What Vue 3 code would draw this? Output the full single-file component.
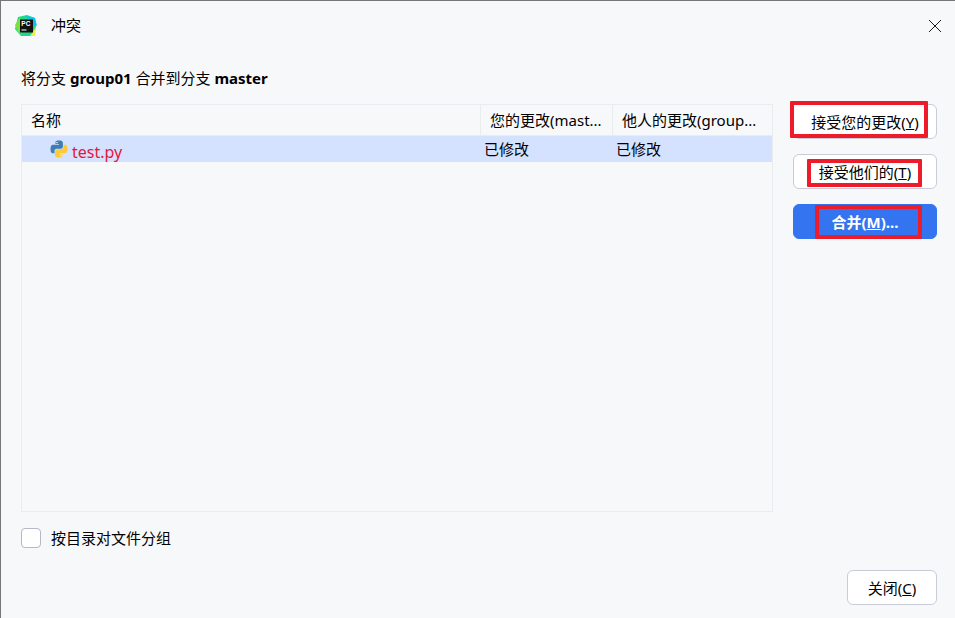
<script setup>
const rows = [{ name: 'test.py', mine: '已修改', theirs: '已修改' }]
</script>

<template>
  <div class="window">
    <header class="titlebar">
      <svg class="logo" width="22" height="22" viewBox="0 0 22 22">
        <path d="M3 2 L12 0 L20 3 L21 12 L18 21 L6 21 L0 14 Z" fill="#21d789" />
        <path d="M11 1 L20 3 L22 11 L17 9 Z" fill="#07c3f2" />
        <path d="M0 10 L5 2 L7 19 L3 17 Z" fill="#7fe03c" />
        <path d="M15 21 L21 12 L20 21 Z" fill="#e8f24a" />
        <rect x="5" y="4.5" width="13" height="13" fill="#111" />
        <rect x="6.5" y="14.5" width="5" height="1" fill="#fff" />
        <text x="6.3" y="10.8" class="logo-text">PC</text>
      </svg>
      <span class="title">冲突</span>
      <svg class="close" width="14" height="14" viewBox="0 0 14 14">
        <path d="M1 1 L13 13 M13 1 L1 13" stroke="#1a1a1a" stroke-width="1" fill="none" />
      </svg>
    </header>

    <p class="subtitle">将分支 <b>group01</b> 合并到分支 <b>master</b></p>

    <div class="body">
      <div class="table">
        <div class="thead grid">
          <div class="th first">名称</div>
          <div class="th">您的更改(mast...</div>
          <div class="th">他人的更改(group...</div>
        </div>
        <div v-for="row in rows" :key="row.name" class="tr grid">
          <div class="file">
            <svg class="py" width="18" height="18" viewBox="0 0 18 18">
              <path d="M8.8 .5C5.4 .5 5.5 2 5.5 2v2h3.5v.8H3.2S.5 4.500 .5 9s2.300 4.300 2.300 4.300H4.500V11.200s-.1-2.400 2.400-2.400h3.800s2.200 0 2.200-2.200V2.800S13.200 .5 8.800 .5z" fill="#3d7eb5" />
              <path d="M9.200 17.500c3.400 0 3.300-1.500 3.300-1.500v-2H9v-.8h5.800s2.700.3 2.700-4.200-2.300-4.300-2.300-4.300H13.500v2.100s.1 2.400-2.400 2.400H7.300s-2.200 0-2.200 2.200v3.800s-.3 2.300 4.100 2.300z" fill="#fbcb3c" />
              <circle cx="7" cy="2.600" r=".8" fill="#dbe8f5" />
              <circle cx="11" cy="15.400" r=".8" fill="#fff3c4" />
            </svg>
            <span class="filename">{{ row.name }}</span>
          </div>
          <div class="td">{{ row.mine }}</div>
          <div class="td">{{ row.theirs }}</div>
        </div>
      </div>

      <aside class="actions">
        <button class="btn">
          <span class="mark mark-a"></span>
          <span class="label">接受您的更改(<u>Y</u>)</span>
        </button>
        <button class="btn">
          <span class="mark mark-b"></span>
          <span class="label">接受他们的(<u>T</u>)</span>
        </button>
        <button class="btn primary">
          <span class="mark mark-c"></span>
          <span class="label">合并(<u>M</u>)...</span>
        </button>
      </aside>
    </div>

    <label class="check">
      <span class="box"></span>
      <span>按目录对文件分组</span>
    </label>

    <footer class="footer">
      <button class="btn close-btn">关闭(<u>C</u>)</button>
    </footer>
  </div>
</template>

<style>
html, body { margin: 0; background: #f7f8fa; }
</style>

<style scoped>
.window {
  width: 955px;
  height: 618px;
  box-sizing: border-box;
  border-top: 1px solid #777;
  border-left: 1px solid #777;
  background: #f7f8fa;
  color: #000;
  font-family: "Noto Sans", "Noto Sans CJK SC", sans-serif;
  font-size: 15px;
  display: flex;
  flex-direction: column;
  overflow: hidden;
}
.titlebar {
  height: 49px;
  display: flex;
  align-items: center;
  padding-left: 14px;
  padding-right: 13px;
  flex: none;
}
.logo { flex: none; }
.logo-text {
  font-family: "Liberation Sans", sans-serif;
  font-size: 6.5px;
  font-weight: 700;
  fill: #fff;
}
.title { margin-left: 14px; line-height: 20px; position: relative; top: -1px; }
.close { margin-left: auto; }
.subtitle {
  margin: 18px 0 0 20px;
  height: 20px;
  line-height: 20px;
  flex: none;
}
.subtitle b { font-weight: 700; }
.body {
  display: flex;
  margin: 16px 0 0 20px;
  flex: none;
}
.table {
  width: 752px;
  height: 408px;
  box-sizing: border-box;
  border: 1px solid #ebecf0;
  flex: none;
}
.grid {
  display: grid;
  grid-template-columns: 458px 132px 1fr;
}
.thead {
  height: 30px;
  border-bottom: 1px solid #ebecf0;
  box-sizing: content-box;
}
.th {
  line-height: 30px;
  padding-left: 9px;
  border-left: 1px solid #ebecf0;
  white-space: nowrap;
  overflow: hidden;
}
.th.first { border-left: none; }
.tr {
  height: 26px;
  background: #d4e2ff;
  align-items: center;
}
.file {
  display: flex;
  align-items: center;
  padding-left: 28px;
}
.py { flex: none; }
.filename {
  margin-left: 4px;
  color: #e3173e;
  font-size: 16px;
  line-height: 20px;
  position: relative;
  top: 3px;
}
.td { padding-left: 4px; line-height: 20px; }
.actions {
  margin-left: 20px;
  width: 144px;
  display: flex;
  flex-direction: column;
  gap: 15px;
  padding-top: 0;
}
.btn {
  position: relative;
  height: 35px;
  box-sizing: border-box;
  width: 144px;
  border: 1px solid #c9ccd6;
  border-radius: 6px;
  background: #fff;
  color: #000;
  font: inherit;
  padding: 0;
  display: flex;
  align-items: center;
  justify-content: center;
}
.btn.primary {
  background: #3574f0;
  border-color: #3574f0;
  color: #fff;
  font-weight: 700;
}
.label { position: relative; line-height: 20px; }
.mark {
  position: absolute;
  box-sizing: border-box;
  border: 4px solid #ec1c2b;
  border-radius: 1px;
}
.mark-a { left: -4px; top: -4px; width: 138px; height: 37px; background: #fff; }
.mark-b { left: 13px; top: 4px; width: 115px; height: 28px; }
.mark-c { left: 21px; top: 0; width: 107px; height: 34px; }
.check {
  display: flex;
  align-items: center;
  gap: 10px;
  margin: 16px 0 0 20px;
  height: 20px;
  line-height: 20px;
  flex: none;
}
.box {
  width: 20px;
  height: 20px;
  box-sizing: border-box;
  border: 1px solid #b4b8c8;
  border-radius: 4px;
  background: #fff;
}
.footer {
  margin-top: auto;
  padding: 0 18px 13px 0;
  display: flex;
  justify-content: flex-end;
}
.close-btn { width: 90px; line-height: 20px; }
</style>
